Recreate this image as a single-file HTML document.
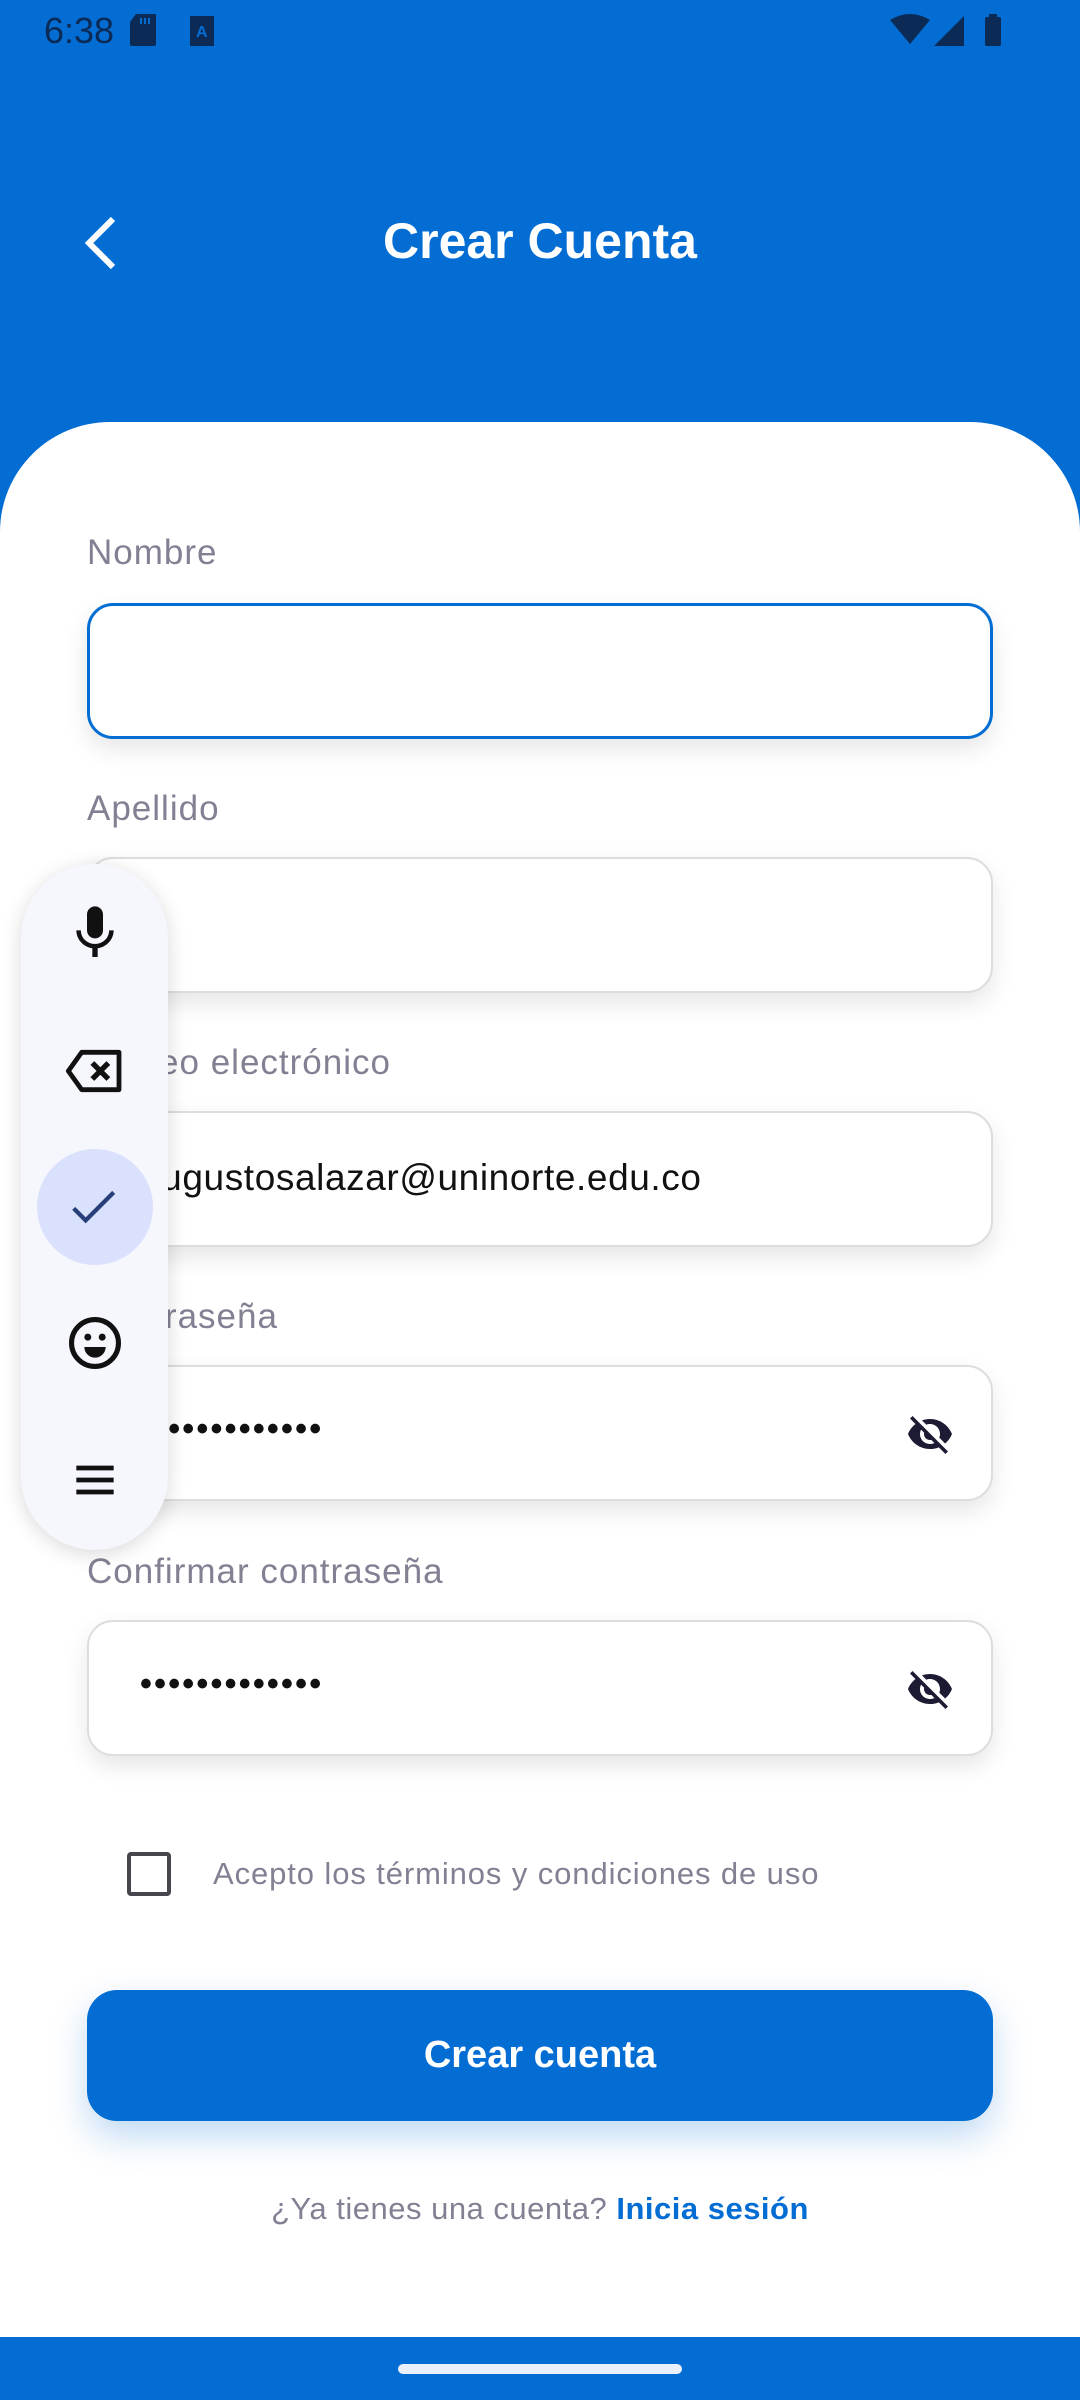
<!DOCTYPE html>
<html><head><meta charset="utf-8">
<style>
*{margin:0;padding:0;box-sizing:border-box}
body{width:1080px;height:2400px;position:relative;overflow:hidden;background:#fff;font-family:"Liberation Sans",sans-serif}
.top{position:absolute;left:0;top:0;width:1080px;height:560px;background:#036DD4}
.sheet{position:absolute;left:0;top:422px;width:1080px;height:1978px;background:#fff;border-radius:110px 110px 0 0}
.time{position:absolute;left:44px;top:10px;font-size:36px;color:#0b2a55}
.title{position:absolute;left:0;width:1080px;top:212px;text-align:center;color:#fff;font-size:50px;font-weight:bold}
.lbl{position:absolute;left:87px;font-size:35px;letter-spacing:1px;color:#857f93}
.fld{position:absolute;left:87px;width:906px;height:136px;border:2px solid #ddd;border-radius:26px;background:#fff;box-shadow:0 10px 24px rgba(0,0,0,0.10)}
.txt{position:absolute;left:140px;font-size:37px;letter-spacing:0.6px;color:#111}
.dots{position:absolute;left:140px;font-size:34px;color:#111;letter-spacing:2.2px;font-weight:bold}
.eye{position:absolute;left:906px;width:48px;height:48px}
.btn{position:absolute;left:87px;top:1990px;width:906px;height:131px;background:#036DD4;border-radius:30px;color:#fff;font-size:38px;font-weight:bold;text-align:center;line-height:131px;box-shadow:0 16px 36px rgba(3,109,212,0.25)}
.bar{position:absolute;left:0;top:2337px;width:1080px;height:63px;background:#036DD4}
.handle{position:absolute;left:398px;top:2364px;width:284px;height:10px;border-radius:5px;background:#eaf1fa}
.kb{position:absolute;left:21px;top:864px;width:147px;height:686px;border-radius:74px;background:#f6f6fd;box-shadow:0 4px 20px rgba(0,0,0,0.15)}
.ic{position:absolute;left:63px;width:64px;height:64px}
</style></head><body>
<div class="top"></div>
<div class="time">6:38</div>
<svg style="position:absolute;left:128px;top:14px" width="30" height="32" viewBox="0 0 30 32"><path d="M8 0h20v30a2 2 0 0 1-2 2H4a2 2 0 0 1-2-2V8z" fill="#0b2a55"/><rect x="12" y="4" width="2" height="6" fill="#036DD4"/><rect x="16" y="4" width="2" height="6" fill="#036DD4"/><rect x="20" y="4" width="2" height="6" fill="#036DD4"/></svg>
<svg style="position:absolute;left:190px;top:16px" width="24" height="30"><rect width="24" height="30" fill="#0b2a55"/><text x="6" y="21" font-size="16" font-weight="bold" fill="#036DD4" font-family="Liberation Sans">A</text></svg>
<svg style="position:absolute;left:890px;top:14px" width="116" height="32" viewBox="0 0 116 32"><path d="M0 6Q20-6 40 6L20 30z" fill="#0b2a55"/><path d="M44 32L74 2V32z" fill="#0b2a55"/><rect x="95" y="3" width="16" height="29" rx="2" fill="#0b2a55"/><rect x="99" y="0" width="8" height="4" fill="#0b2a55"/></svg>
<svg style="position:absolute;left:80px;top:215px" width="40" height="56" viewBox="0 0 40 56"><path d="M33 4L9 28l24 24" stroke="#fff" stroke-width="6" fill="none"/></svg>
<div class="title">Crear Cuenta</div>
<div class="sheet"></div>

<div class="lbl" style="top:533px">Nombre</div>
<div class="fld" style="top:603px;border:3px solid #036DD4"></div>
<div class="lbl" style="top:789px">Apellido</div>
<div class="fld" style="top:857px"></div>
<div class="lbl" style="top:1043px">Correo electrónico</div>
<div class="fld" style="top:1111px"></div>
<div class="txt" style="top:1157px">augustosalazar@uninorte.edu.co</div>
<div class="lbl" style="top:1297px">Contraseña</div>
<div class="fld" style="top:1365px"></div>
<div class="dots" style="top:1410px">•••••••••••••</div>
<svg class="eye" style="top:1410px" viewBox="0 0 24 24"><path fill="#1c1b33" d="M12 7c2.76 0 5 2.24 5 5 0 .65-.13 1.26-.36 1.83l2.92 2.92c1.51-1.26 2.7-2.89 3.43-4.75-1.73-4.39-6-7.5-11-7.5-1.4 0-2.740.25-3.98.7l2.16 2.16C10.74 7.13 11.35 7 12 7zM2 4.27l2.28 2.28.46.46C3.08 8.3 1.78 10.02 1 12c1.73 4.39 6 7.5 11 7.5 1.55 0 3.03-.3 4.38-.84l.42.42L19.73 22 21 20.73 3.27 3 2 4.27zM7.53 9.8l1.55 1.55c-.05.21-.08.43-.08.65 0 1.66 1.34 3 3 3 .22 0 .44-.03.65-.08l1.55 1.55c-.67.33-1.41.53-2.2.53-2.76 0-5-2.24-5-5 0-.79.2-1.53.53-2.2z"/></svg>
<div class="lbl" style="top:1552px">Confirmar contraseña</div>
<div class="fld" style="top:1620px"></div>
<div class="dots" style="top:1665px">•••••••••••••</div>
<svg class="eye" style="top:1665px" viewBox="0 0 24 24"><path fill="#1c1b33" d="M12 7c2.76 0 5 2.24 5 5 0 .65-.13 1.26-.36 1.83l2.92 2.92c1.51-1.26 2.7-2.89 3.43-4.75-1.73-4.39-6-7.5-11-7.5-1.4 0-2.74.25-3.98.7l2.16 2.16C10.74 7.13 11.35 7 12 7zM2 4.27l2.28 2.28.46.46C3.08 8.3 1.78 10.02 1 12c1.73 4.39 6 7.5 11 7.5 1.55 0 3.03-.3 4.38-.84l.42.42L19.73 22 21 20.73 3.27 3 2 4.27zM7.53 9.8l1.55 1.55c-.05.21-.08.43-.08.65 0 1.66 1.34 3 3 3 .22 0 .44-.03.65-.08l1.55 1.55c-.67.33-1.41.53-2.2.53-2.76 0-5-2.24-5-5 0-.79.2-1.53.53-2.2z"/></svg>

<div style="position:absolute;left:127px;top:1852px;width:44px;height:44px;border:4px solid #48454e;border-radius:4px"></div>
<div style="position:absolute;left:213px;top:1856px;font-size:31px;letter-spacing:0.9px;color:#857f93">Acepto los términos y condiciones de uso</div>

<div class="btn">Crear cuenta</div>
<div style="position:absolute;left:0;width:1080px;top:2191px;text-align:center;font-size:31px;letter-spacing:0.5px;color:#857f93">¿Ya tienes una cuenta? <b style="color:#036DD4">Inicia sesión</b></div>

<div class="bar"></div><div class="handle"></div>

<div class="kb"></div>
<svg class="ic" style="top:901px" viewBox="0 0 24 24"><path fill="#111" d="M12 14c1.66 0 3-1.34 3-3V5c0-1.66-1.34-3-3-3S9 3.34 9 5v6c0 1.66 1.34 3 3 3zm5.3-3c0 3-2.54 5.1-5.3 5.1S6.7 14 6.7 11H5c0 3.41 2.72 6.23 6 6.72V21h2v-3.28c3.280-.48 6-3.3 6-6.72h-1.7z"/></svg>
<svg class="ic" style="top:1039px" viewBox="0 0 24 24"><path fill="none" stroke="#111" stroke-width="1.8" stroke-linejoin="round" d="M7 5h14v14H7L2 12z"/><path stroke="#111" stroke-width="2" d="M11 9l6 6M17 9l-6 6"/></svg>
<div style="position:absolute;left:37px;top:1149px;width:116px;height:116px;border-radius:58px;background:#dae1fc"></div>
<svg class="ic" style="top:1175px" viewBox="0 0 24 24"><path fill="none" stroke="#27407a" stroke-width="1.6" d="M4 12.5l4.5 4.5L19 6.5"/></svg>
<svg class="ic" style="top:1311px" viewBox="0 0 24 24"><circle cx="12" cy="12" r="8.8" fill="none" stroke="#111" stroke-width="1.9"/><circle cx="9.3" cy="9.8" r="1.3" fill="#111"/><circle cx="14.7" cy="9.8" r="1.3" fill="#111"/><path d="M8 13.5h8a4 4 0 0 1-8 0z" fill="#111"/></svg>
<svg class="ic" style="top:1448px" viewBox="0 0 24 24"><path stroke="#111" stroke-width="1.8" d="M5 7.5h14M5 12h14M5 16.5h14"/></svg>
</body></html>
